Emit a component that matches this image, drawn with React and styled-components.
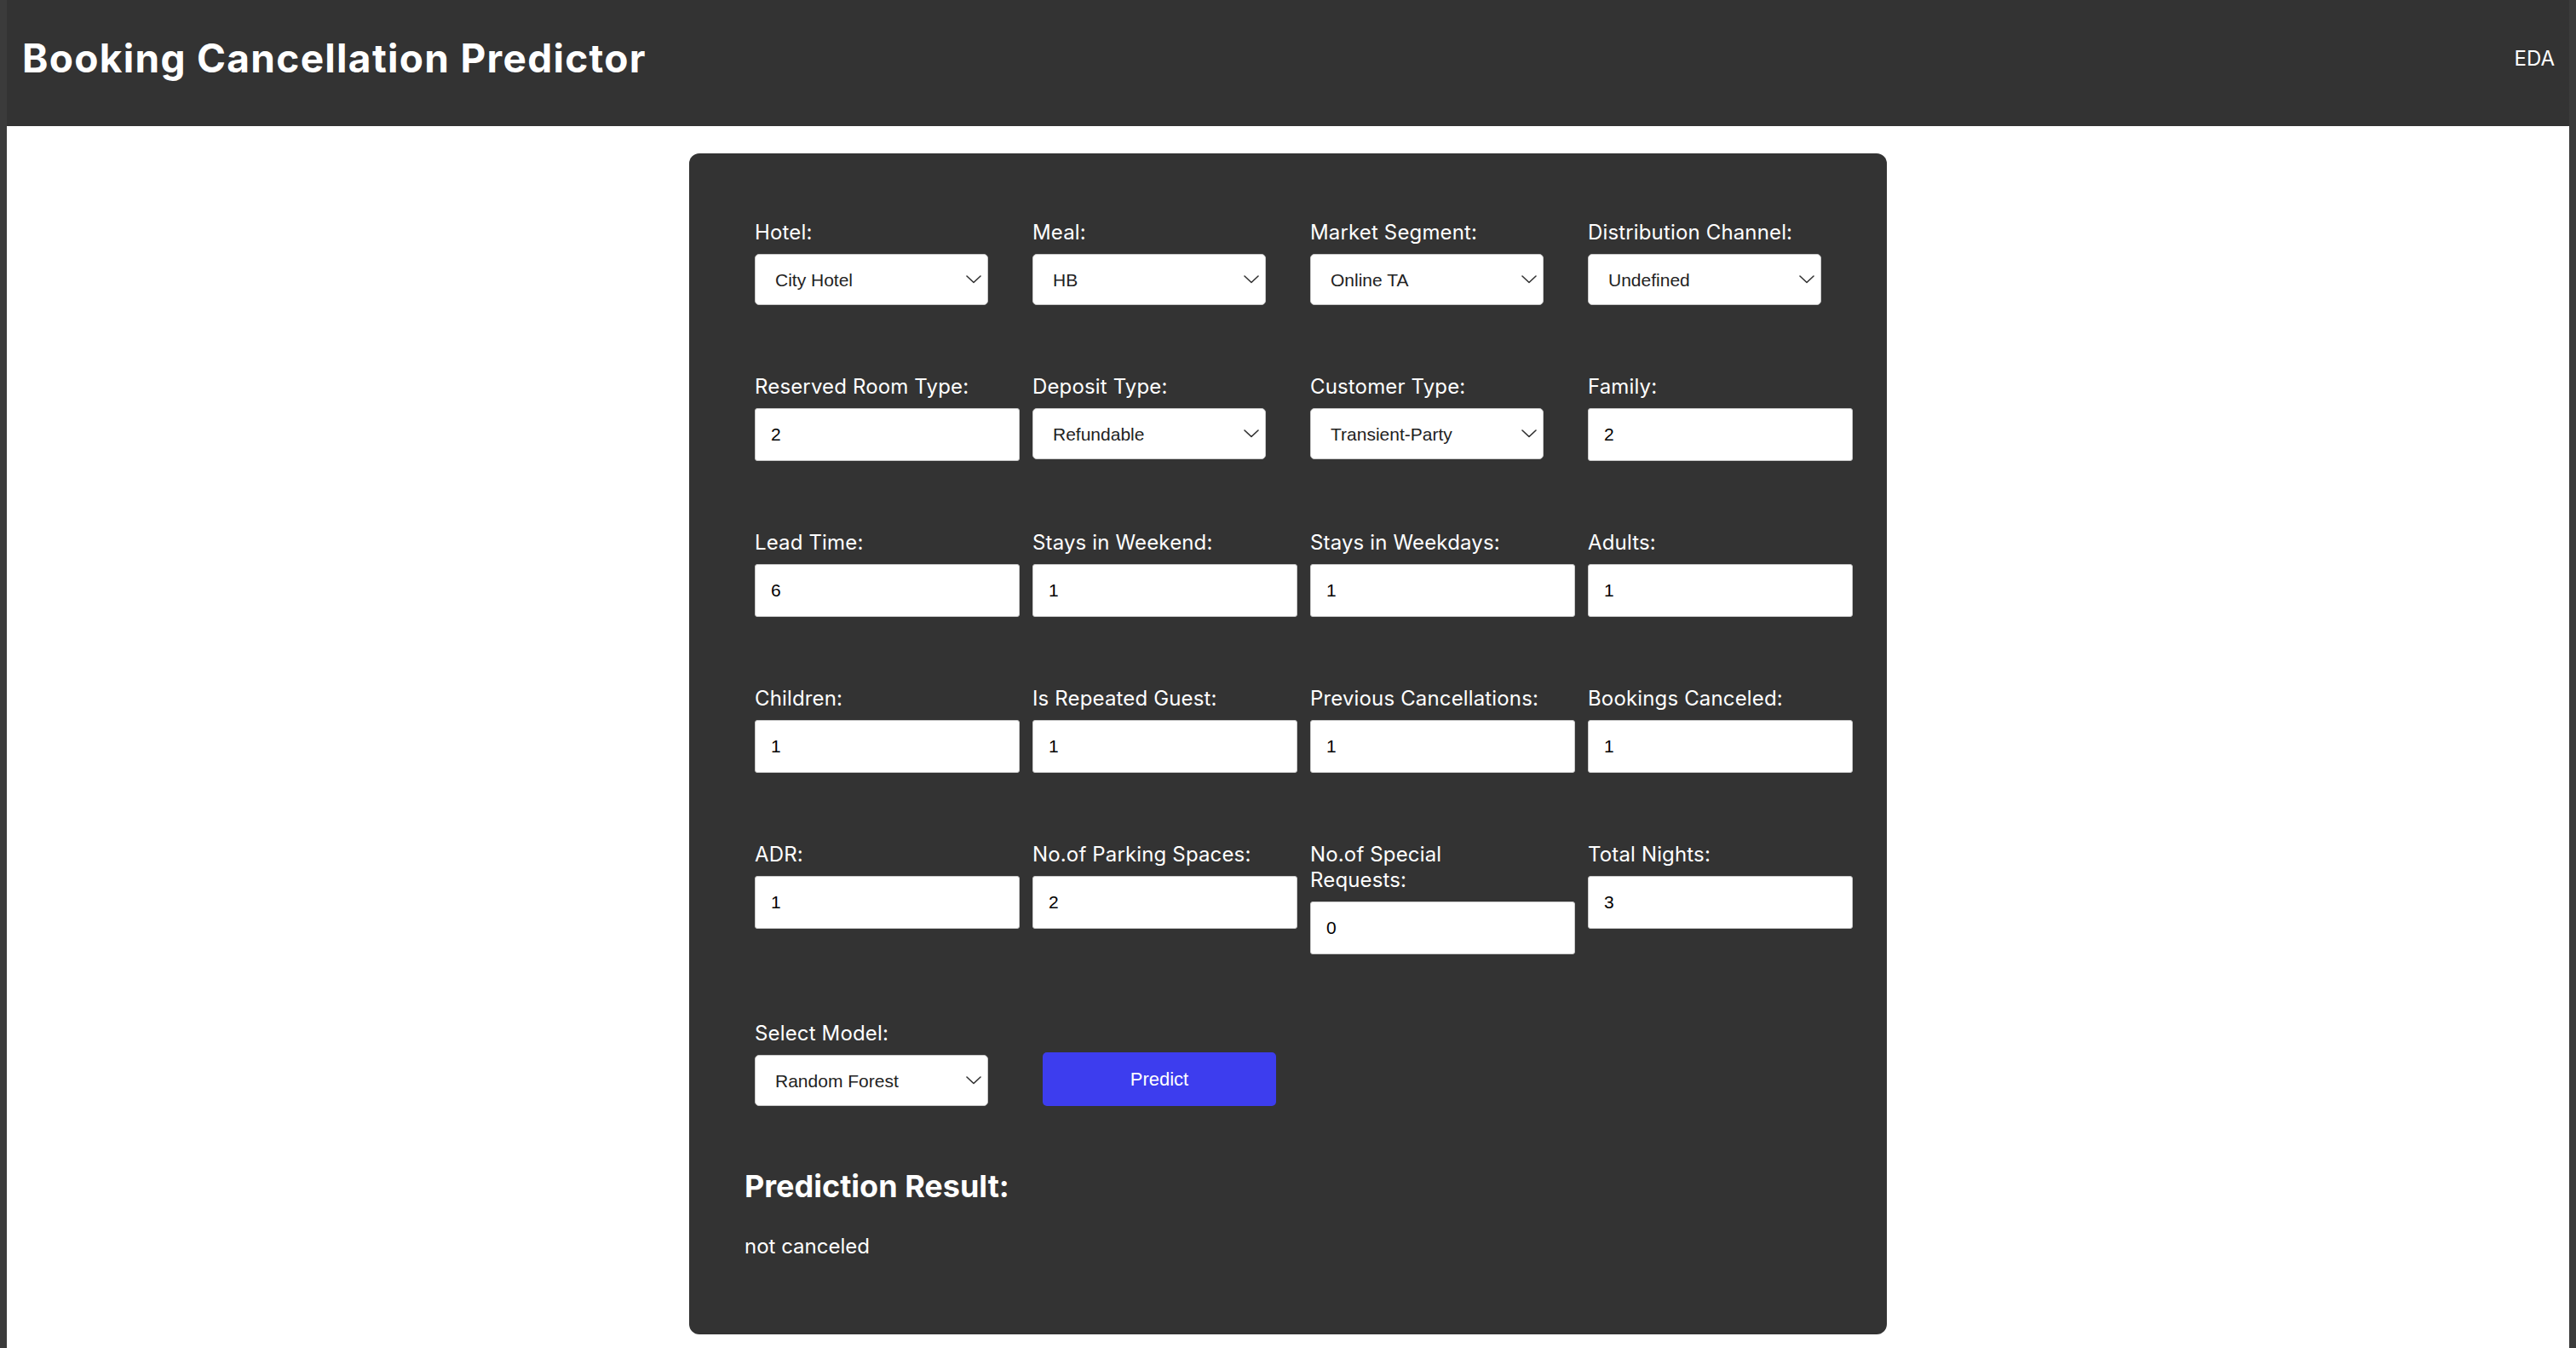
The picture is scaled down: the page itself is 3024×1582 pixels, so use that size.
import React from "react";
import styled, { createGlobalStyle } from "styled-components";

const GlobalStyle = createGlobalStyle`
  html, body {
    margin: 0;
    padding: 0;
    background: #3b3b3b;
  }
  * { box-sizing: border-box; }
`;

const Frame = styled.div`
  min-height: 100vh;
  padding: 0 8px;
  background: #3b3b3b;
  display: flex;
  flex-direction: column;
  font-family: Inter, "Noto Sans", sans-serif;
`;

const Header = styled.header`
  height: 148px;
  background: #333333;
  display: flex;
  align-items: center;
  justify-content: space-between;
  padding: 0 17px 11px 18px;
`;

const Title = styled.h1`
  margin: 0;
  font-size: 46px;
  line-height: 55px;
  font-weight: 700;
  letter-spacing: 1.3px;
  color: #ffffff;
`;

const NavLink = styled.a`
  font-size: 24px;
  line-height: 29px;
  color: #ffffff;
  text-decoration: none;
`;

const Main = styled.main`
  flex: 1;
  background: #ffffff;
  padding: 32px 0 16px;
`;

const Panel = styled.section`
  width: 1406px;
  margin: 0 auto;
  background: #333333;
  border-radius: 12px;
  padding: 78px 39px 89px 65px;
`;

const FormGrid = styled.div`
  display: grid;
  grid-template-columns: repeat(4, 274px);
  column-gap: 52px;
  row-gap: 81px;
  align-items: start;
  padding-left: 12px;
`;

const Field = styled.div`
  width: 274px;
  display: flex;
  flex-direction: column;
  align-items: flex-start;
`;

const Label = styled.label`
  display: block;
  max-width: 274px;
  font-size: 24px;
  line-height: 30px;
  letter-spacing: 0.15px;
  color: #ffffff;
  margin-bottom: 10px;
`;

const TextInput = styled.input`
  flex: none;
  width: 311px;
  height: 62px;
  border: 1px solid #c9c9c9;
  border-radius: 3px;
  background: #ffffff;
  padding: 0 18px;
  font-family: "Liberation Sans", Arial, sans-serif;
  font-size: 21px;
  color: #000000;
  outline: none;
`;

const SelectWrap = styled.div`
  position: relative;
  width: 274px;
  height: 60px;
`;

const Select = styled.select`
  appearance: none;
  -webkit-appearance: none;
  width: 100%;
  height: 100%;
  border: 1px solid #c9c9c9;
  border-radius: 5px;
  background: #ffffff;
  padding: 0 40px 0 23px;
  font-family: "Liberation Sans", Arial, sans-serif;
  font-size: 21px;
  color: #222222;
  outline: none;
`;

const Chevron = styled.svg`
  position: absolute;
  right: 8px;
  top: 50%;
  transform: translateY(-50%);
  pointer-events: none;
`;

const ModelRow = styled.div`
  display: flex;
  align-items: flex-end;
  gap: 64px;
  margin-top: 78px;
  padding-left: 12px;
`;

const PredictButton = styled.button`
  width: 274px;
  height: 63px;
  border: none;
  border-radius: 5px;
  background: #3d3dee;
  color: #ffffff;
  font-family: "Liberation Sans", Arial, sans-serif;
  font-size: 22px;
  cursor: pointer;
`;

const ResultHeading = styled.h2`
  margin: 72px 0 0;
  font-size: 36px;
  line-height: 44px;
  font-weight: 700;
  color: #ffffff;
`;

const ResultText = styled.p`
  margin: 34px 0 0;
  font-size: 24px;
  line-height: 29px;
  color: #ffffff;
`;

function Dropdown({ value, options }) {
  return (
    <SelectWrap>
      <Select defaultValue={value}>
        {options.map((o) => (
          <option key={o} value={o}>
            {o}
          </option>
        ))}
      </Select>
      <Chevron width="18" height="10" viewBox="0 0 18 10" fill="none">
        <path d="M1 1 L9 8.5 L17 1" stroke="#333" strokeWidth="1.6" strokeLinecap="round" strokeLinejoin="round" />
      </Chevron>
    </SelectWrap>
  );
}

const fields = [
  { label: "Hotel:", type: "select", value: "City Hotel", options: ["City Hotel", "Resort Hotel"] },
  { label: "Meal:", type: "select", value: "HB", options: ["BB", "HB", "FB", "SC", "Undefined"] },
  { label: "Market Segment:", type: "select", value: "Online TA", options: ["Online TA", "Offline TA/TO", "Direct", "Corporate", "Groups"] },
  { label: "Distribution Channel:", type: "select", value: "Undefined", options: ["TA/TO", "Direct", "Corporate", "GDS", "Undefined"] },
  { label: "Reserved Room Type:", value: "2" },
  { label: "Deposit Type:", type: "select", value: "Refundable", options: ["No Deposit", "Non Refund", "Refundable"] },
  { label: "Customer Type:", type: "select", value: "Transient-Party", options: ["Transient", "Transient-Party", "Contract", "Group"] },
  { label: "Family:", value: "2" },
  { label: "Lead Time:", value: "6" },
  { label: "Stays in Weekend:", value: "1" },
  { label: "Stays in Weekdays:", value: "1" },
  { label: "Adults:", value: "1" },
  { label: "Children:", value: "1" },
  { label: "Is Repeated Guest:", value: "1" },
  { label: "Previous Cancellations:", value: "1" },
  { label: "Bookings Canceled:", value: "1" },
  { label: "ADR:", value: "1" },
  { label: "No.of Parking Spaces:", value: "2" },
  { label: "No.of Special Requests:", value: "0" },
  { label: "Total Nights:", value: "3" },
];

export default function App() {
  return (
    <>
      <GlobalStyle />
      <Frame>
        <Header>
          <Title>Booking Cancellation Predictor</Title>
          <NavLink href="#">EDA</NavLink>
        </Header>
        <Main>
          <Panel>
            <FormGrid>
              {fields.map((f) => (
                <Field key={f.label}>
                  <Label>{f.label}</Label>
                  {f.type === "select" ? (
                    <Dropdown value={f.value} options={f.options} />
                  ) : (
                    <TextInput type="number" defaultValue={f.value} />
                  )}
                </Field>
              ))}
            </FormGrid>
            <ModelRow>
              <Field>
                <Label>Select Model:</Label>
                <Dropdown value="Random Forest" options={["Random Forest", "Logistic Regression", "Decision Tree", "XGBoost"]} />
              </Field>
              <PredictButton type="button">Predict</PredictButton>
            </ModelRow>
            <ResultHeading>Prediction Result:</ResultHeading>
            <ResultText>not canceled</ResultText>
          </Panel>
        </Main>
      </Frame>
    </>
  );
}
